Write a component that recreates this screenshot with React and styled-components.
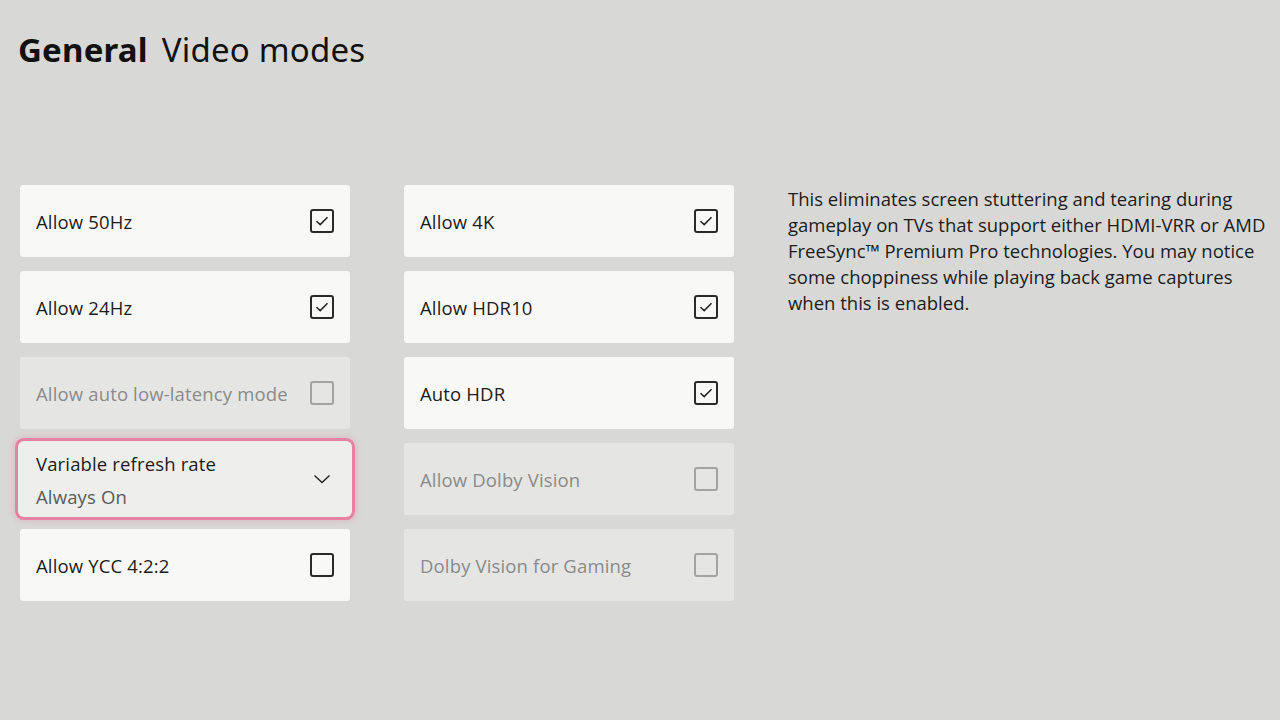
import React from "react";
import styled, { createGlobalStyle, css } from "styled-components";

const GlobalStyle = createGlobalStyle`
  html, body {
    margin: 0;
    background: #d8d9d6;
  }
  body {
    font-family: "Open Sans", "Noto Sans", sans-serif;
    color: #1a1a1a;
  }
`;

const Page = styled.div`
  width: 1280px;
  height: 720px;
  box-sizing: border-box;
  padding: 28px 0 0 18px;
  overflow: hidden;
`;

const Title = styled.h1`
  margin: 0;
  font-family: "Noto Sans", sans-serif;
  font-size: 33px;
  font-weight: 400;
  letter-spacing: 0.2px;
  color: #111;
  display: flex;
  gap: 14px;
  line-height: 44px;
`;

const Strong = styled.span`
  font-weight: 700;
`;

const Body = styled.div`
  display: flex;
  margin-top: 113px;
  padding-left: 2px;
`;

const Column = styled.div`
  display: flex;
  flex-direction: column;
  gap: 14px;
  width: 330px;
  margin-right: 54px;
`;

const Tile = styled.div`
  height: 72px;
  box-sizing: border-box;
  display: flex;
  align-items: center;
  justify-content: space-between;
  padding: 0 16px 0 16px;
  border-radius: 3px;
  background: ${(p) => (p.$disabled ? "#e5e6e4" : "#f8f9f7")};
  color: ${(p) => (p.$disabled ? "#8a8a8a" : "#1c1c1c")};
  font-size: 18.5px;
  letter-spacing: 0.15px;
  ${(p) =>
    p.$focused &&
    css`
      background: #eeeeec;
      box-shadow: 0 0 0 2px #eeeeec, 0 0 0 5px #e583a5,
        0 0 7px 6px rgba(226, 125, 159, 0.35);
      border-radius: 4px;
    `}
`;

const Label = styled.span`
  white-space: nowrap;
`;

const Stack = styled.div`
  display: flex;
  flex-direction: column;
  gap: 8px;
  padding-top: 1px;
`;

const Sub = styled.span`
  color: #5a5a5a;
`;

const Box = styled.span`
  width: 24px;
  height: 24px;
  box-sizing: border-box;
  border: 2px solid ${(p) => (p.$disabled ? "#a3a3a3" : "#2a2a2a")};
  border-radius: 3px;
  display: flex;
  align-items: center;
  justify-content: center;
  flex-shrink: 0;
`;

const Note = styled.p`
  margin: 1px 0 0 0;
  width: 492px;
  font-size: 18.5px;
  line-height: 26px;
  color: #1c1c1c;
`;

const Check = ({ checked, disabled }) => (
  <Box $disabled={disabled}>
    {checked && (
      <svg width="16" height="16" viewBox="0 0 16 16">
        <path d="M2.5 8.2 L6.2 11.6 L13.5 4.3" fill="none" stroke="#222" strokeWidth="1.5" />
      </svg>
    )}
  </Box>
);

const Chevron = () => (
  <svg width="20" height="20" viewBox="0 0 20 20" style={{ marginRight: 2 }}>
    <path d="M2.5 6.5 L10 13.5 L17.5 6.5" fill="none" stroke="#222" strokeWidth="1.4" />
  </svg>
);

const left = [
  { label: "Allow 50Hz", checked: true },
  { label: "Allow 24Hz", checked: true },
  { label: "Allow auto low-latency mode", disabled: true },
  { label: "Variable refresh rate", sub: "Always On", focused: true },
  { label: "Allow YCC 4:2:2" },
];

const right = [
  { label: "Allow 4K", checked: true },
  { label: "Allow HDR10", checked: true },
  { label: "Auto HDR", checked: true },
  { label: "Allow Dolby Vision", disabled: true },
  { label: "Dolby Vision for Gaming", disabled: true },
];

const Setting = ({ item }) => (
  <Tile $disabled={item.disabled} $focused={item.focused}>
    {item.sub ? (
      <Stack>
        <Label>{item.label}</Label>
        <Sub>{item.sub}</Sub>
      </Stack>
    ) : (
      <Label>{item.label}</Label>
    )}
    {item.sub ? <Chevron /> : <Check checked={item.checked} disabled={item.disabled} />}
  </Tile>
);

export default function App() {
  return (
    <Page>
      <GlobalStyle />
      <Title>
        <Strong>General</Strong>
        <span>Video modes</span>
      </Title>
      <Body>
        <Column>
          {left.map((item) => (
            <Setting key={item.label} item={item} />
          ))}
        </Column>
        <Column>
          {right.map((item) => (
            <Setting key={item.label} item={item} />
          ))}
        </Column>
        <Note>
          This eliminates screen stuttering and tearing during gameplay on TVs that support either
          HDMI-VRR or AMD FreeSync™ Premium Pro technologies. You may notice some choppiness while
          playing back game captures when this is enabled.
        </Note>
      </Body>
    </Page>
  );
}
